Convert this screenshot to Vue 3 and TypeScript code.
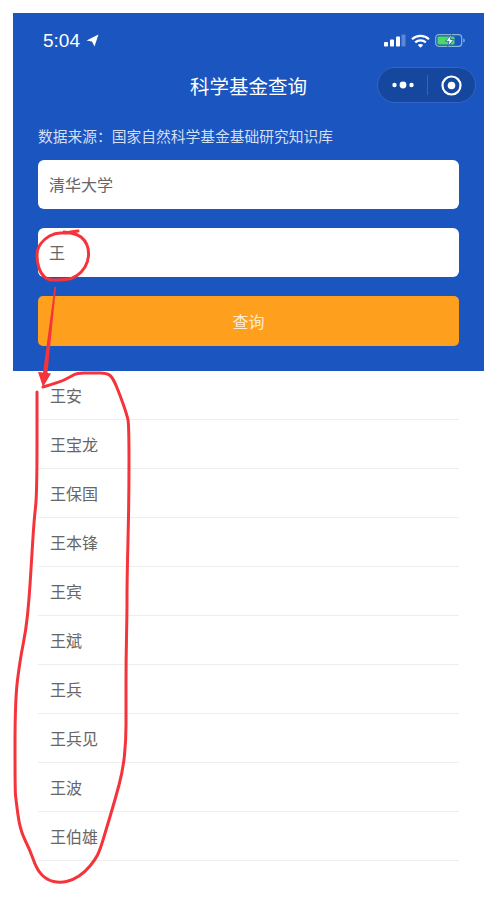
<template>
  <div class="page">
    <div class="panel">
      <div class="status">
        <div class="time">
          <span>5:04</span>
          <svg width="13" height="13" viewBox="0 0 13 13"><path d="M12.500 .5 .5 6.500l5.500 1 2.500 5z" fill="#fff" /></svg>
        </div>
        <div class="status-icons">
          <svg width="22" height="13" viewBox="0 0 22 13">
            <rect x="0" y="8" width="4" height="4.500" rx=".8" fill="#fff" />
            <rect x="6" y="5.500" width="4" height="7" rx=".8" fill="#fff" />
            <rect x="12" y="2.500" width="4" height="10" rx=".8" fill="#fff" />
            <rect x="17.500" y=".5" width="4" height="12" rx=".8" fill="#5f86d4" />
          </svg>
          <svg width="19" height="14" viewBox="0 0 19 14" fill="none" stroke="#fff" stroke-width="2.200">
            <path d="M1 5.200c4.700-4.400 12.300-4.400 17 0" />
            <path d="M4.200 8.400c3-2.700 7.600-2.700 10.600 0" />
            <path d="M9.500 13.800 6.800 11c1.500-1.200 3.900-1.200 5.400 0z" fill="#fff" stroke="none" />
          </svg>
          <svg width="30" height="13" viewBox="0 0 30 13">
            <rect x=".7" y=".7" width="26" height="11.600" rx="3" fill="none" stroke="#86b4d8" stroke-width="1.200" />
            <rect x="2.500" y="2.500" width="17" height="8" rx="1.200" fill="#4cd964" />
            <path d="M28.300 4.500c1 .3 1.500 1 1.500 2s-.5 1.700-1.500 2z" fill="#86b4d8" />
            <path d="M16.500 .5 10.500 7.300h3.500l-1.200 5.200 6-7h-3.500z" fill="#fff" stroke="#1a55c0" stroke-width=".8" />
          </svg>
        </div>
      </div>
      <div class="nav">
        <span class="title">科学基金查询</span>
        <div class="capsule">
          <svg width="22" height="10" viewBox="0 0 22 10" fill="#fff">
            <circle cx="2.500" cy="5" r="2.200" />
            <circle cx="11" cy="5" r="3.400" />
            <circle cx="19.500" cy="5" r="2.200" />
          </svg>
          <i class="divider"></i>
          <svg width="21" height="21" viewBox="0 0 21 21">
            <circle cx="10.500" cy="10.500" r="9" fill="none" stroke="#fff" stroke-width="2.200" />
            <circle cx="10.500" cy="10.500" r="3.800" fill="#fff" />
          </svg>
        </div>
      </div>
      <p class="source">数据来源：国家自然科学基金基础研究知识库</p>
      <div class="field">清华大学</div>
      <div class="field">王</div>
      <button class="submit">查询</button>
    </div>

    <ul class="list">
      <li v-for="name in names" :key="name">{{ name }}</li>
    </ul>

    <!-- 红色手绘标注 -->
    <svg class="marks" width="493" height="900" viewBox="0 0 493 900" fill="none">
      <path :d="circleMark" class="stroke" />
      <path :d="loopMark" class="stroke" />
      <path d="M54.500 287H56L47.500 373 51 373.500 43 387 38 372 43 372.500z" fill="#f5333a" />
    </svg>
  </div>
</template>

<script setup lang="ts">
type Point = [number, number]

const names: string[] = [
  '王安',
  '王宝龙',
  '王保国',
  '王本锋',
  '王宾',
  '王斌',
  '王兵',
  '王兵见',
  '王波',
  '王伯雄',
]

// 把手绘点连成平滑曲线
function smooth(points: Point[]): string {
  let d = `M${points[0][0]} ${points[0][1]}`
  for (let i = 1; i < points.length - 1; i++) {
    const [x, y] = points[i]
    const [nx, ny] = points[i + 1]
    d += ` Q${x} ${y} ${(x + nx) / 2} ${(y + ny) / 2}`
  }
  const last = points[points.length - 1]
  return `${d} L${last[0]} ${last[1]}`
}

const circleMark = smooth([
  [78, 231], [66, 233], [55, 233], [44, 239], [37, 249], [37, 262], [41, 274],
  [48, 280], [60, 280], [72, 279], [82, 272], [88, 262], [89, 250], [85, 240], [77, 234], [64, 232],
])

const loopMark = smooth([
  [43, 387], [60, 382], [70, 377], [77, 373], [92, 373], [107, 373], [113, 378], [120, 395],
  [127, 415], [129, 425], [129, 500], [127, 580], [127, 615], [126, 660], [126, 710], [126, 740],
  [123, 770], [115, 800], [106, 830], [100, 850], [95, 860], [85, 872], [73, 880], [60, 883],
  [47, 880], [37, 870], [30, 850], [20, 830], [16, 800], [15, 790], [15, 700], [20, 660],
  [26, 630], [29, 600], [31, 570], [34, 520], [37, 495], [37, 392],
])
</script>

<style>
body {
  background: #fff;
}
</style>

<style scoped>
.page {
  position: relative;
  height: 900px;
  padding: 13px 9px 0 13px;
  box-sizing: border-box;
  font-family: "Noto Sans CJK SC", "Liberation Sans", sans-serif;
  overflow: hidden;
}

.panel {
  height: 358px;
  padding: 0 25px;
  box-sizing: border-box;
  background: #1a55c0;
  color: #fff;
}

.status {
  display: flex;
  justify-content: space-between;
  align-items: center;
  height: 55px;
  margin: 0 -6px 0 5px;
}

.time {
  display: flex;
  align-items: center;
  gap: 6px;
  font-family: "Liberation Sans", sans-serif;
  font-size: 19px;
}

.status-icons {
  display: flex;
  align-items: center;
  gap: 5px;
}

.nav {
  position: relative;
  display: flex;
  justify-content: center;
  align-items: center;
  height: 34px;
}

.title {
  font-size: 19.500px;
}

.capsule {
  position: absolute;
  right: -17px;
  top: -1px;
  display: flex;
  align-items: center;
  width: 99px;
  height: 36px;
  padding-left: 14px;
  box-sizing: border-box;
  border: 1px solid #2f66c8;
  border-radius: 18px;
  background: #15479f;
}

.divider {
  width: 1px;
  height: 20px;
  margin: 0 13px 0 13px;
  background: #2f66c8;
}

.source {
  margin: 24px 0 0;
  font-size: 14.750px;
  line-height: 20px;
  color: #d3dff3;
}

.field {
  height: 49px;
  margin-top: 14px;
  padding-left: 11px;
  border-radius: 6px;
  background: #fff;
  font-size: 16px;
  line-height: 49px;
  color: #666;
}

.field + .field {
  margin-top: 19px;
}

.submit {
  display: block;
  width: 100%;
  height: 50px;
  margin-top: 19px;
  border: none;
  border-radius: 5px;
  background: #fea01d;
  color: rgba(255, 255, 255, 0.8);
  font: inherit;
  font-size: 16px;
}

.list {
  margin: 0;
  padding: 0 25px;
  list-style: none;
}

.list li {
  height: 49px;
  padding-left: 12px;
  box-sizing: border-box;
  border-bottom: 1px solid #eee;
  font-size: 16px;
  line-height: 49px;
  color: #666;
}

.marks {
  position: absolute;
  left: 0;
  top: 0;
  pointer-events: none;
}

.stroke {
  stroke: #f5333a;
  stroke-width: 3;
  stroke-linejoin: round;
  stroke-linecap: round;
}
</style>
